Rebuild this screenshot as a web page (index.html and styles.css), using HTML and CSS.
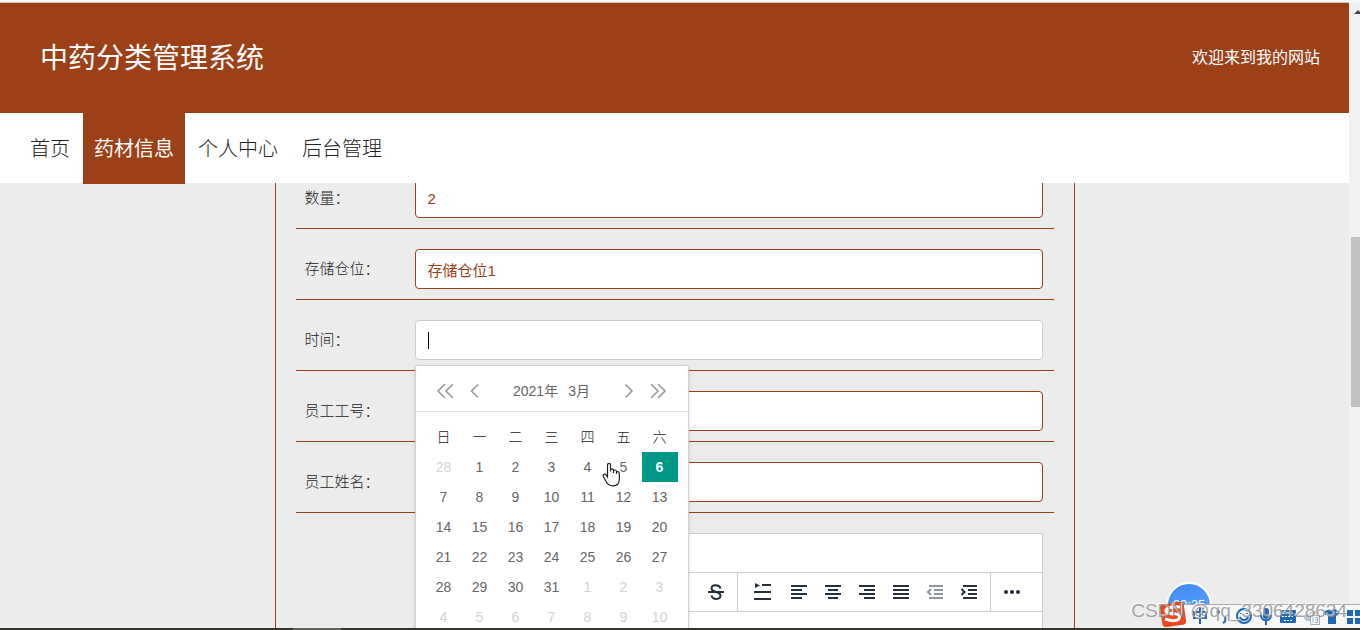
FILE: index.html
```html
<!DOCTYPE html>
<html lang="zh-CN">
<head>
<meta charset="utf-8">
<title>中药分类管理系统</title>
<link rel="stylesheet" href="styles.css">
</head>
<body>
<div class="window">
  <div class="page">
    <header class="banner">
      <h1 class="banner-title">中药分类管理系统</h1>
      <span class="banner-note">欢迎来到我的网站</span>
    </header>
    <nav class="nav">
      <a class="nav-link" href="#">首页</a>
      <a class="nav-link active" href="#">药材信息</a>
      <a class="nav-link" href="#">个人中心</a>
      <a class="nav-link" href="#">后台管理</a>
    </nav>
    <main class="content">
      <form class="form">
        <div class="row"><label class="label" for="qty">数量：</label><div class="field"><input class="input" id="qty" type="text" value="2"></div></div>
        <div class="row"><label class="label" for="store">存储仓位：</label><div class="field"><input class="input" id="store" type="text" value="存储仓位1"></div></div>
        <div class="row"><label class="label" for="time">时间：</label>
          <div class="field"><input class="input focused" id="time" type="text"><span class="caret"></span>
            <div class="calendar">
              <div class="cal-head">
                <button class="cal-btn" type="button" aria-label="上一年"><svg width="18" height="18" viewBox="0 0 18 18"><path d="M9 2L2 9L9 16M17 2L10 9L17 16"/></svg></button>
                <button class="cal-btn" type="button" aria-label="上一月"><svg width="18" height="18" viewBox="0 0 18 18"><path d="M12 2.500L5.500 9L12 15.500"/></svg></button>
                <div class="cal-title"><span>2021年</span><span>3月</span></div>
                <button class="cal-btn" type="button" aria-label="下一月"><svg width="18" height="18" viewBox="0 0 18 18"><path d="M7.500 2.500L14 9L7.500 15.500"/></svg></button>
                <button class="cal-btn" type="button" aria-label="下一年"><svg width="18" height="18" viewBox="0 0 18 18"><path d="M3 2L10 9L3 16M10 2L17 9L10 16"/></svg></button>
              </div>
              <table class="cal-table">
                <thead><tr><th>日</th><th>一</th><th>二</th><th>三</th><th>四</th><th>五</th><th>六</th></tr></thead>
                <tbody>
                  <tr><td class="dim">28</td><td>1</td><td>2</td><td>3</td><td>4</td><td>5</td><td class="today">6</td></tr>
                  <tr><td>7</td><td>8</td><td>9</td><td>10</td><td>11</td><td>12</td><td>13</td></tr>
                  <tr><td>14</td><td>15</td><td>16</td><td>17</td><td>18</td><td>19</td><td>20</td></tr>
                  <tr><td>21</td><td>22</td><td>23</td><td>24</td><td>25</td><td>26</td><td>27</td></tr>
                  <tr><td>28</td><td>29</td><td>30</td><td>31</td><td class="dim">1</td><td class="dim">2</td><td class="dim">3</td></tr>
                  <tr><td class="dim">4</td><td class="dim">5</td><td class="dim">6</td><td class="dim">7</td><td class="dim">8</td><td class="dim">9</td><td class="dim">10</td></tr>
                </tbody>
              </table>
              <svg class="pointer" width="20" height="26" viewBox="0 0 20 26"><path d="M5.500 14V3C5.500 0.800 8.500 0.800 8.500 3V9.500V8C8.500 6.500 11.500 6.500 11.500 8.300V11V9C11.500 7.500 14.500 7.700 14.500 9.500V12V10.500C14.500 9.200 17.300 9.400 17.300 11.300V17C17.300 21.500 14.500 23.800 11 23.800C7 23.800 5 22 3.500 18.500L1.300 14.500C0.500 12.500 3 11.300 4.200 13L5.500 15Z"/></svg>
            </div>
          </div>
        </div>
        <div class="row"><label class="label" for="no">员工工号：</label><div class="field"><input class="input" id="no" type="text"></div></div>
        <div class="row"><label class="label" for="name">员工姓名：</label><div class="field"><input class="input" id="name" type="text"></div></div>
        <div class="row">
          <div class="label"></div>
          <div class="field editor">
            <div class="editor-menu"></div>
            <div class="toolbar">
              <div class="group"><button class="tool" type="button" aria-label="删除线"><svg width="18" height="18" viewBox="0 0 18 18"><path d="M1 9H17M13.500 5.500C12.500 1 4.500 1 4.500 5.500C4.500 9.500 13.500 8 13.500 12.500C13.500 17 5.500 17 4.500 12.500"/></svg></button></div>
              <div class="group">
                <button class="tool wide" type="button" aria-label="行高"><svg width="18" height="18" viewBox="0 0 18 18"><path d="M9 2H18M1 9H18M1 16H18"/><path class="fill" d="M2 0L7 2.500L2 5Z"/></svg></button>
                <button class="tool" type="button" aria-label="左对齐"><svg width="18" height="18" viewBox="0 0 18 18"><path d="M1 3H17M1 7H12M1 11H17M1 15H12"/></svg></button>
                <button class="tool" type="button" aria-label="居中"><svg width="18" height="18" viewBox="0 0 18 18"><path d="M1 3H17M4 7H14M1 11H17M4 15H14"/></svg></button>
                <button class="tool" type="button" aria-label="右对齐"><svg width="18" height="18" viewBox="0 0 18 18"><path d="M1 3H17M6 7H17M1 11H17M6 15H17"/></svg></button>
                <button class="tool" type="button" aria-label="两端对齐"><svg width="18" height="18" viewBox="0 0 18 18"><path d="M1 3H17M1 7H17M1 11H17M1 15H17"/></svg></button>
                <button class="tool" type="button" aria-label="减少缩进" disabled><svg width="18" height="18" viewBox="0 0 18 18"><path d="M3 3H17M8 7H17M8 11H17M3 15H17M5 6L2 9L5 12"/></svg></button>
                <button class="tool" type="button" aria-label="增加缩进"><svg width="18" height="18" viewBox="0 0 18 18"><path d="M3 3H17M8 7H17M8 11H17M3 15H17M1.500 6L4.500 9L1.500 12"/></svg></button>
              </div>
              <div class="group last"><button class="tool" type="button" aria-label="更多"><svg width="18" height="18" viewBox="0 0 18 18"><g class="fill"><circle cx="3" cy="9" r="2"/><circle cx="9" cy="9" r="2"/><circle cx="15" cy="9" r="2"/></g></svg></button></div>
            </div>
            <div class="editor-body"></div>
          </div>
        </div>
      </form>
    </main>
  </div>
  <div class="scrollbar"><span class="scroll-arrow"></span><span class="scroll-thumb"></span></div>
</div>
<div class="taskbar"><span class="task"></span></div>
<div class="recorder">00:25</div>
<div class="ime">
  <svg class="ime-icons" width="200" height="28" viewBox="0 0 200 28">
    <rect class="bar" x="20" y="5" width="180" height="23"/>
    <path class="line" d="M10 4.500H200"/>
    <rect class="sogou" x="1" y="3" width="24" height="23" rx="4" transform="rotate(-8 13 14)"/>
    <path class="sogou-s" d="M20 7C13 6 5 8 6 11.500S20 12 19.500 17S11 21 5 19"/>
    <g class="ink"><path d="M34 12H46V18H34ZM40 7V24"/><circle cx="58" cy="12" r="1"/><path d="M65 17C66 20 65 22 63 23"/><circle cx="84" cy="16" r="7"/><path d="M80 17C81 21 87 21 88 17M81 13V14M87 13V14"/><path d="M101 15C101 22 111 22 111 15M106 20V25"/></g>
    <g class="solid"><rect x="103" y="8" width="6" height="11" rx="3"/><rect x="120" y="10" width="16" height="13" rx="1"/><path d="M165 11L170 9L172 11L175 9L180 12L177 16L176 15V24H168V15H165Z"/><rect x="187" y="10" width="6" height="6"/><rect x="195" y="10" width="6" height="6"/><rect x="187" y="18" width="6" height="6"/><rect x="195" y="18" width="6" height="6"/></g>
    <path class="keys" d="M122 13.500H134M122 16.500H134M124 20.500H132"/>
    <path class="faint-fill" d="M144 18C143 14 147 13 149 15C150 10 157 10 158 14H150V21H146Z"/>
    <path class="faint" d="M150.500 15.500H159.500V24.500H150.500ZM153 17.500V22.500M155 17.500H157.500V22.500H155M155 20H157"/>
  </svg>
</div>
<div class="watermark">CSDN @qq_3306428634</div>
</body>
</html>
```
FILE: styles.css
```css
* { box-sizing: border-box; }
body {
  margin: 0;
  height: 100vh;
  display: flex;
  flex-direction: column;
  overflow: hidden;
  background: #ececec;
  color: #333;
  font: 300 15px/20px "Liberation Sans", "Noto Sans CJK SC", sans-serif;
}
button, input { font: inherit; }
.window { flex: 1; min-height: 0; display: flex; border-top: 2px solid #f8f8f8; }
.page { flex: 1; min-width: 0; overflow: hidden; border-top: 1px solid #d4c8c4; }
.banner {
  position: relative;
  z-index: 2;
  height: 110px;
  padding: 0 29px 0 40px;
  display: flex;
  align-items: center;
  justify-content: space-between;
  background: #9c4018;
  color: #fff;
  font-weight: 400;
}
.banner-title { margin: 0; padding-top: 2px; font-size: 28px; line-height: 40px; font-weight: 400; }
.banner-note { font-size: 16px; }
.nav {
  position: relative;
  z-index: 2;
  height: 70px;
  padding-left: 19px;
  display: flex;
  gap: 2px;
  background: #fff;
}
.nav-link {
  height: 71px;
  padding: 0 11px;
  font-size: 20px;
  line-height: 72px;
  color: #222;
  text-decoration: none;
}
.nav-link.active { background: #9c4018; color: #fff; font-weight: 400; }
.content { margin-top: -25px; }
.form {
  max-width: 800px;
  margin: 0 auto;
  padding: 0 20px;
  border: 1px solid #9c4018;
  border-top: 0;
}
.row { display: flex; padding: 20px 11px 10px 9px; border-bottom: 1px solid #9c4018; }
.label { width: 110px; flex: none; line-height: 40px; color: #222; }
.field { position: relative; flex: 1; min-width: 0; }
.input {
  display: block;
  width: 100%;
  height: 40px;
  padding: 0 12px;
  border: 1px solid #9c4018;
  border-radius: 4px;
  background: #fff;
  color: #9c4018;
  font-weight: 400;
  outline: 0;
}
.input.focused { border-color: #ccc; }
.caret { position: absolute; left: 13px; top: 12px; width: 1px; height: 17px; background: #000; }
.calendar {
  position: absolute;
  z-index: 1;
  left: 0;
  top: 45px;
  background: #fff;
  border: 1px solid #d2d2d2;
  border-radius: 2px;
  box-shadow: 0 2px 4px rgba(0, 0, 0, .12);
  font-size: 14px;
  color: #666;
}
.cal-head {
  display: flex;
  align-items: center;
  height: 46px;
  padding: 5px 15px 0;
  border-bottom: 1px solid #e2e2e2;
}
.cal-btn { width: 30px; height: 30px; padding: 6px 5px; border: 0; background: none; }
.cal-btn svg { display: block; fill: none; stroke: #999; stroke-width: 1.6; }
.cal-title { flex: 1; display: flex; justify-content: center; gap: 10px; font-weight: 400; }
.cal-table { margin: 10px; border-collapse: collapse; table-layout: fixed; width: 252px; }
.cal-table th, .cal-table td { height: 30px; padding: 0; text-align: center; font-weight: 300; }
.cal-table th { color: #222; }
.cal-table .dim { color: #d2d2d2; }
.cal-table .today { background: #009688; color: #fff; font-weight: 700; }
.pointer { position: absolute; left: 186px; top: 96px; fill: #fff; stroke: #222; stroke-width: 1.2; }
.editor { border: 1px solid #ccc; background: #fff; }
.editor-menu { height: 39px; border-bottom: 1px solid #ccc; }
.toolbar { height: 39px; display: flex; justify-content: flex-end; border-bottom: 1px solid #ccc; }
.group { display: flex; align-items: center; padding: 0 4px; border-right: 1px solid #ccc; }
.group.last { border: 0; padding-right: 13px; }
.tool { width: 34px; height: 34px; padding: 8px; border: 0; background: none; }
.tool.wide { width: 40px; padding: 8px 11px; }
.tool svg { display: block; fill: none; stroke: #222f3e; stroke-width: 2; }
.tool .fill { fill: #222f3e; stroke: none; }
.tool:disabled svg { opacity: .5; }
.editor-body { height: 300px; }
.scrollbar {
  position: relative;
  width: 11px;
  flex: none;
  background: #f1f1f1;
  border-top: 1px solid #f8f8f8;
}
.scroll-arrow {
  position: absolute;
  left: 5px;
  top: 7px;
  border: 4px solid transparent;
  border-top: 0;
  border-bottom-color: #444;
}
.scroll-thumb { position: absolute; left: 2px; right: 0; top: 234px; height: 170px; background: #c1c1c1; }
.taskbar { height: 2px; flex: none; background: #36352a; padding-left: 293px; }
.task { display: block; width: 48px; height: 2px; background: #66645a; }
.recorder {
  position: absolute;
  right: 148px;
  bottom: 2px;
  width: 46px;
  height: 46px;
  border: 2px solid #fff;
  border-radius: 23px;
  background: linear-gradient(160deg, #3f86f0, #64b0ff);
  color: #fff;
  font-size: 13px;
  line-height: 42px;
  text-align: center;
}
.ime { position: absolute; right: 0; bottom: 2px; width: 200px; height: 28px; overflow: hidden; }
.ime-icons { display: block; fill: none; }
.ime-icons .bar { fill: #f7f8f8; }
.ime-icons .line { stroke: #aaa; }
.ime-icons .sogou { fill: #e9481c; }
.ime-icons .sogou-s { stroke: #fff; stroke-width: 3; }
.ime-icons .ink { stroke: #1c68b3; stroke-width: 2; }
.ime-icons .solid { fill: #1c68b3; }
.ime-icons .keys { stroke: #fff; stroke-dasharray: 2 1; }
.ime-icons .faint { stroke: #a3b2c7; }
.ime-icons .faint-fill { fill: #b9c4d4; }
.watermark {
  position: absolute;
  right: 13px;
  bottom: 9px;
  font-size: 19px;
  color: rgba(140, 140, 140, .8);
  text-shadow: -1px -1px 0 rgba(255, 255, 255, .7);
}
```
